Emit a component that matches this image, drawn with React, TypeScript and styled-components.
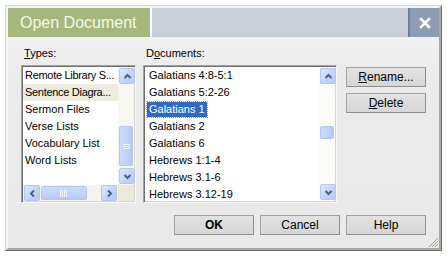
import React from "react";
import styled, { createGlobalStyle } from "styled-components";

const Global = createGlobalStyle`
  html, body { margin: 0; padding: 0; background: #ffffff; }
  body { font-family: "Liberation Sans", Arial, sans-serif; font-size: 11px; color: #000; }
`;

const Outer = styled.div`
  margin: 5px 0 0 5px;
  width: 437px;
  height: 246px;
  box-sizing: border-box;
  border-top: 1px solid #d6d6d6;
  border-left: 1px solid #d6d6d6;
  border-right: 1px solid #6e6e68;
  border-bottom: 1px solid #6e6e68;
`;

const Frame = styled.div`
  position: relative;
  height: 100%;
  box-sizing: border-box;
  border-top: 2px solid #f6f6f6;
  border-left: 2px solid #f6f6f6;
  border-right: 2px solid #a9a9a2;
  border-bottom: 2px solid #a9a9a2;
  display: flex;
  flex-direction: column;
`;

const TitleBar = styled.div`
  height: 29px;
  display: flex;
  background: #c9ced8;
`;

const TitleTab = styled.div`
  width: 144px;
  padding-left: 12px;
  box-sizing: border-box;
  background: #a5b77d;
  border-right: 2px solid #ffffff;
  color: #f7f7e6;
  font-size: 16px;
  line-height: 29px;
  white-space: nowrap;
`;

const TitleFill = styled.div`
  flex: 1;
`;

const CloseBtn = styled.div`
  width: 31px;
  background: #8e9cb1;
  border-left: 2px solid #6d819f;
  box-sizing: border-box;
  display: flex;
  align-items: center;
  justify-content: center;
`;

const Body = styled.div`
  flex: 1;
  background: linear-gradient(#f1f1f1 0px, #ebebeb 40px, #e9e9e9 100%);
  padding: 9px 13px 0 13px;
  display: flex;
  flex-direction: column;
`;

const MainRow = styled.div`
  display: flex;
  align-items: flex-start;
`;

const Column = styled.div<{ $w: number; $mr: number }>`
  width: ${(p) => p.$w}px;
  margin-right: ${(p) => p.$mr}px;
  display: flex;
  flex-direction: column;
`;

const Label = styled.div`
  line-height: 14px;
  height: 14px;
  padding-left: 3px;
  margin-bottom: 5px;
  white-space: nowrap;
`;

const ListBox = styled.div`
  height: 138px;
  box-sizing: border-box;
  border-top: 1px solid #a4a49c;
  border-left: 1px solid #a4a49c;
  border-right: 1px solid #f8f8f8;
  border-bottom: 1px solid #f8f8f8;
  box-shadow: inset 1px 1px 0 #6f6f6f, inset -1px -1px 0 #d8d6cc;
  background: #ffffff;
  padding: 1px;
  display: grid;
  overflow: hidden;
`;

const TypesGrid = styled(ListBox)`
  grid-template-columns: 1fr 16px;
  grid-template-rows: 1fr 16px;
`;

const DocsGrid = styled(ListBox)`
  grid-template-columns: 1fr 16px;
  grid-template-rows: 1fr;
`;

const Items = styled.div`
  display: flex;
  flex-direction: column;
  overflow: hidden;
  min-width: 0;
`;

const Item = styled.div<{ $soft?: boolean; $tight?: boolean }>`
  height: 17px;
  line-height: 17px;
  padding-left: 2px;
  white-space: nowrap;
  flex: none;
  letter-spacing: ${(p) => (p.$tight ? "-0.3px" : "0")};
  background: ${(p) => (p.$soft ? "#eeebdf" : "transparent")};
`;

const DocItem = styled.div`
  height: 17px;
  flex: none;
  display: flex;
  align-items: center;
  padding-left: 2px;
  white-space: nowrap;
`;

const DocText = styled.span<{ $sel?: boolean }>`
  padding: 0 2px;
  line-height: 15px;
  ${(p) =>
    p.$sel
      ? `background:#316ac5;color:#fff;outline:1px dotted #c8a060;outline-offset:0;`
      : ``}
`;

const VScroll = styled.div<{ $track: string }>`
  display: flex;
  flex-direction: column;
  background: ${(p) => p.$track};
  padding: 1px;
`;

const Track = styled.div`
  flex: 1;
  display: flex;
  flex-direction: column;
  padding-top: 1px;
`;

const HScroll = styled.div`
  display: flex;
  align-items: center;
  background: #f5f4ec;
  padding: 0 1px;
`;

const HTrack = styled.div`
  flex: 1;
  display: flex;
  padding-left: 1px;
`;

const Corner = styled.div`
  background: #ece9d8;
`;

const ArrowBtn = styled.div`
  width: 14px;
  height: 14px;
  flex: none;
  border: 1px solid #b4c6ee;
  border-radius: 2px;
  background: linear-gradient(135deg, #dde7fe 0%, #c3d4fb 55%, #b7c9f4 100%);
  display: flex;
  align-items: center;
  justify-content: center;
`;

const VThumb = styled.div<{ $top: number; $h: number }>`
  margin-top: ${(p) => p.$top}px;
  height: ${(p) => p.$h}px;
  width: 14px;
  box-sizing: border-box;
  border: 1px solid #b4c6ee;
  border-radius: 2px;
  background: linear-gradient(90deg, #cbdafd 0%, #c1d2fa 60%, #b6c8f3 100%);
  display: flex;
  align-items: center;
  justify-content: center;
`;

const HThumb = styled.div<{ $left: number; $w: number }>`
  margin-left: ${(p) => p.$left}px;
  width: ${(p) => p.$w}px;
  height: 14px;
  box-sizing: border-box;
  border: 1px solid #b4c6ee;
  border-radius: 2px;
  background: linear-gradient(#cbdafd 0%, #c1d2fa 60%, #b6c8f3 100%);
  display: flex;
  align-items: center;
  justify-content: center;
`;

const SideCol = styled.div`
  width: 80px;
  padding-top: 21px;
  display: flex;
  flex-direction: column;
  gap: 6px;
`;

const Button = styled.div<{ $bold?: boolean }>`
  width: 80px;
  height: 20px;
  box-sizing: border-box;
  border: 1px solid #a3a3a3;
  border-right-color: #8f8f8f;
  border-bottom-color: #8f8f8f;
  background: linear-gradient(#e2e2e2, #d6d6d6);
  display: flex;
  align-items: center;
  justify-content: center;
  font-size: 12px;
  font-weight: ${(p) => (p.$bold ? "bold" : "normal")};
  color: #000;
`;

const BottomRow = styled.div`
  margin-top: 12px;
  display: flex;
  justify-content: flex-end;
  gap: 6px;
`;

const Grip = styled.svg`
  position: absolute;
  right: 1px;
  bottom: 1px;
`;

const Chevron = ({ dir }: { dir: "up" | "down" | "left" | "right" }) => {
  const pts: Record<string, string> = {
    up: "2.5,7 5.5,4 8.5,7",
    down: "2.5,4 5.5,7 8.5,4",
    left: "7,2.5 4,5.5 7,8.5",
    right: "4,2.5 7,5.5 4,8.5",
  };
  return (
    <svg width="11" height="11" viewBox="0 0 11 11">
      <polyline points={pts[dir]} fill="none" stroke="#4d6185" strokeWidth="2" />
    </svg>
  );
};

const GripV = () => (
  <svg width="7" height="5" viewBox="0 0 7 5">
    {[0.5, 2.5, 4.5].map((y) => (
      <line key={y} x1="0" x2="7" y1={y} y2={y} stroke="#eef3ff" strokeWidth="1" />
    ))}
  </svg>
);

const GripH = () => (
  <svg width="8" height="7" viewBox="0 0 8 7">
    {[0.5, 2.5, 4.5, 6.5].map((x) => (
      <line key={x} x1={x} x2={x} y1="0" y2="7" stroke="#eef3ff" strokeWidth="1" />
    ))}
  </svg>
);

const types = ["Remote Library S...", "Sentence Diagra...", "Sermon Files", "Verse Lists", "Vocabulary List", "Word Lists"];
const docs = [
  "Galatians 4:8-5:1",
  "Galatians 5:2-26",
  "Galatians 1",
  "Galatians 2",
  "Galatians 6",
  "Hebrews 1:1-4",
  "Hebrews 3.1-6",
  "Hebrews 3.12-19",
];

export default function App() {
  return (
    <>
      <Global />
      <Outer>
        <Frame>
          <TitleBar>
            <TitleTab>Open Document</TitleTab>
            <TitleFill />
            <CloseBtn>
              <svg width="12" height="12" viewBox="0 0 12 12">
                <path d="M2 2 L10 10 M10 2 L2 10" stroke="#ffffff" strokeWidth="2.6" strokeLinecap="square" />
              </svg>
            </CloseBtn>
          </TitleBar>
          <Body>
            <MainRow>
              <Column $w={115} $mr={7}>
                <Label>
                  <u>T</u>ypes:
                </Label>
                <TypesGrid>
                  <Items>
                    {types.map((t, i) => (
                      <Item key={t} $soft={i === 1} $tight={t.endsWith("...")}>
                        {t}
                      </Item>
                    ))}
                  </Items>
                  <VScroll $track="#f7f6f0">
                    <ArrowBtn>
                      <Chevron dir="up" />
                    </ArrowBtn>
                    <Track>
                      <VThumb $top={41} $h={40}>
                        <GripV />
                      </VThumb>
                    </Track>
                    <ArrowBtn>
                      <Chevron dir="down" />
                    </ArrowBtn>
                  </VScroll>
                  <HScroll>
                    <ArrowBtn>
                      <Chevron dir="left" />
                    </ArrowBtn>
                    <HTrack>
                      <HThumb $left={0} $w={46}>
                        <GripH />
                      </HThumb>
                    </HTrack>
                    <ArrowBtn>
                      <Chevron dir="right" />
                    </ArrowBtn>
                  </HScroll>
                  <Corner />
                </TypesGrid>
              </Column>
              <Column $w={194} $mr={9}>
                <Label>
                  D<u>o</u>cuments:
                </Label>
                <DocsGrid>
                  <Items>
                    {docs.map((d, i) => (
                      <DocItem key={d}>
                        <DocText $sel={i === 2}>{d}</DocText>
                      </DocItem>
                    ))}
                  </Items>
                  <VScroll $track="#fbfbf7">
                    <ArrowBtn>
                      <Chevron dir="up" />
                    </ArrowBtn>
                    <Track>
                      <VThumb $top={41} $h={13} />
                    </Track>
                    <ArrowBtn>
                      <Chevron dir="down" />
                    </ArrowBtn>
                  </VScroll>
                </DocsGrid>
              </Column>
              <SideCol>
                <Button>
                  <span>
                    <u>R</u>ename...
                  </span>
                </Button>
                <Button>
                  <span>
                    <u>D</u>elete
                  </span>
                </Button>
              </SideCol>
            </MainRow>
            <BottomRow>
              <Button $bold>OK</Button>
              <Button>Cancel</Button>
              <Button>Help</Button>
            </BottomRow>
          </Body>
          <Grip width="10" height="10" viewBox="0 0 10 10">
            {[3, 6, 9].map((o) => (
              <line key={o} x1={10 - o} y1="10" x2="10" y2={10 - o} stroke="#a0a09a" strokeWidth="1" />
            ))}
          </Grip>
        </Frame>
      </Outer>
    </>
  );
}
